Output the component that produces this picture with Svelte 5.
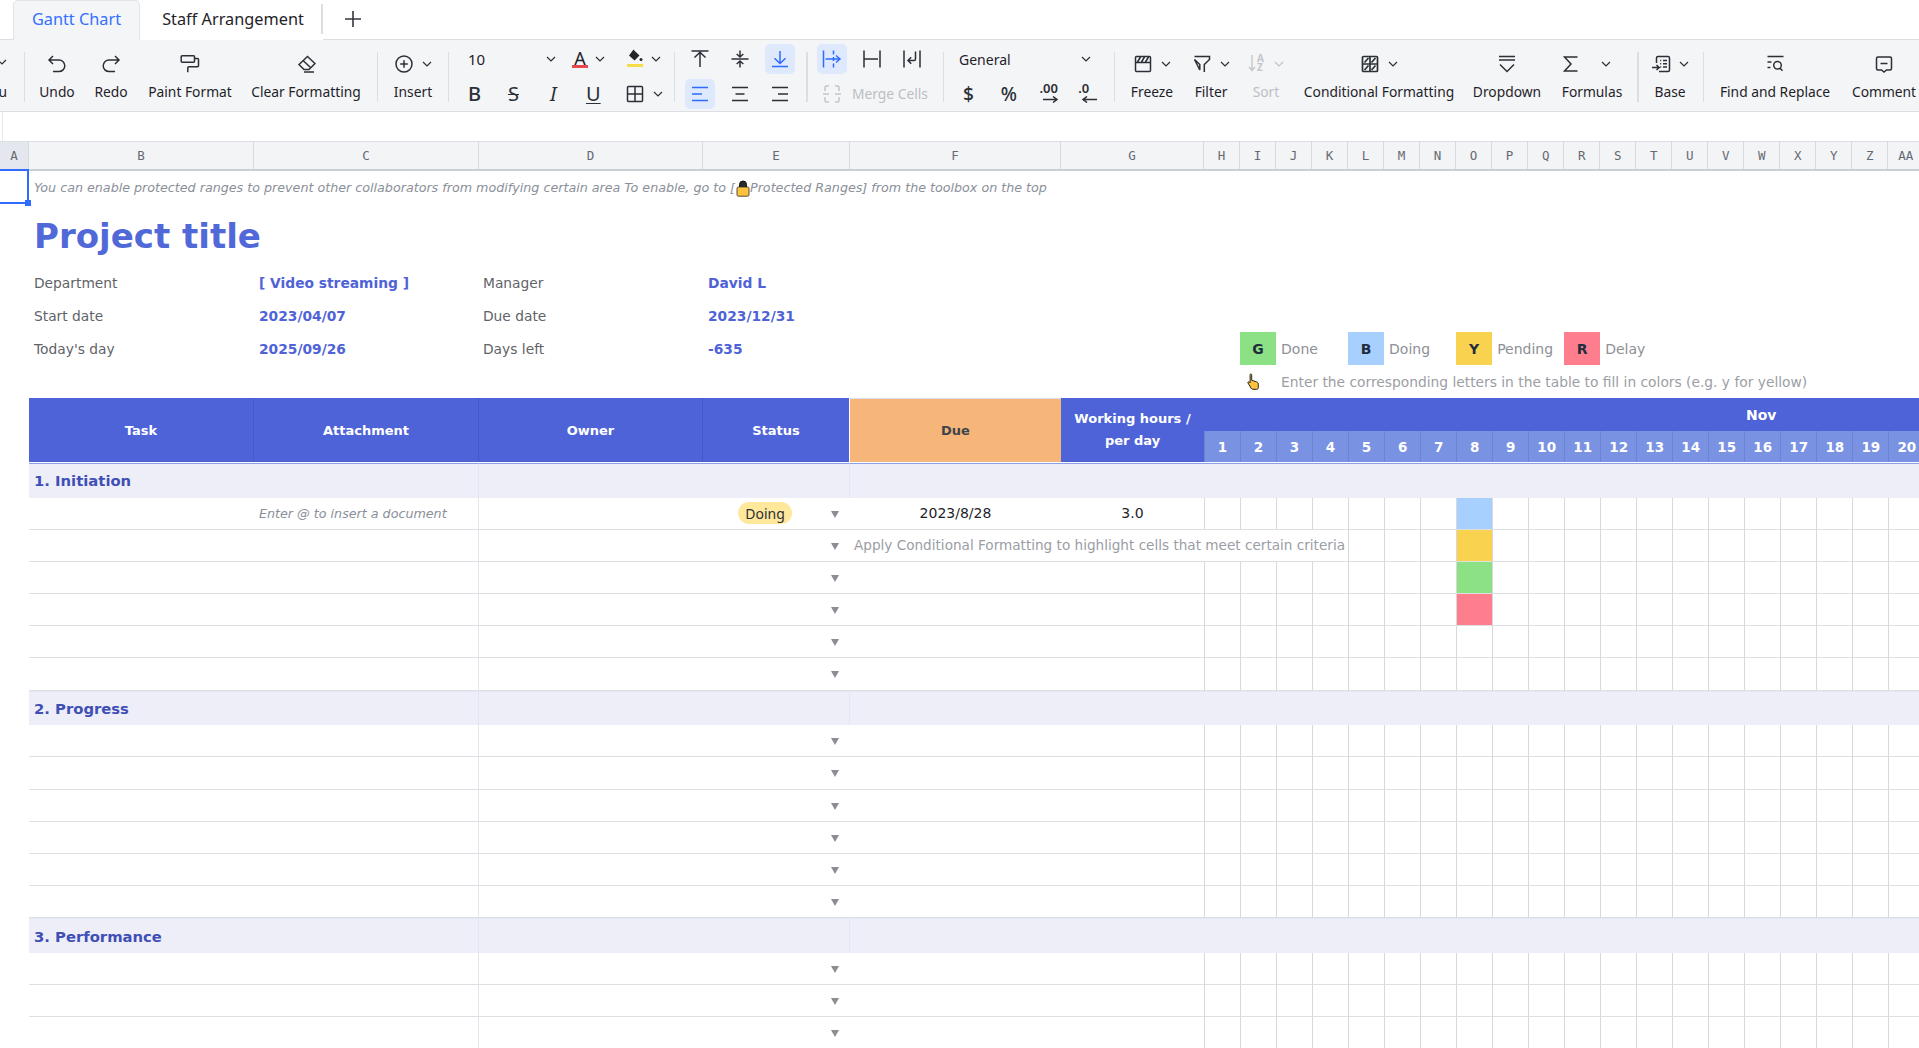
<script>
  const letters = ['A','B','C','D','E','F','G','H','I','J','K','L','M','N','O','P','Q','R','S','T','U','V','W','X','Y','Z','AA'];
  const days = Array.from({ length: 20 }, (_, i) => i + 1);
  const icons = {
    undo: ['M6 2 2 6l4 4M2.500 6h9.500a5.800 5.800 0 0 1 0 11.600H6'],
    redo: ['M14 2l4 4-4 4M17.500 6H8a5.800 5.800 0 0 0 0 11.600h6'],
    paint: ['M2.200 1.700h11.300a1 1 0 0 1 1 1v4.600a1 1 0 0 1-1 1H2.200a1 1 0 0 1-1-1V2.700a1 1 0 0 1 1-1zM14.500 4.500h3a1 1 0 0 1 1 1v6.200a1 1 0 0 1-1 1H8.800a1 1 0 0 0-1 1v4.600'],
    clear: ['M3 10.500 11.500 2.500 19 9.500 13 15.500H8zM7 6.500l7.500 7M8 18h10'],
    insert: ['M10 2a8 8 0 1 1 0 16 8 8 0 0 1 0-16zM10 6.200v7.600M6.200 10h7.600'],
    freeze: ['M3.500 2.500h13a1 1 0 0 1 1 1v13a1 1 0 0 1-1 1h-13a1 1 0 0 1-1-1v-13a1 1 0 0 1 1-1zM2.500 8.500h15M4.500 8l3-5M8.500 8l3-5M12.500 8l3-5'],
    filter: ['M2.500 2.500h15v3L12.300 10.500v7.500M7.800 16V10.500L2.500 5.500z'],
    cond: ['M3.500 2.500h13a1 1 0 0 1 1 1v13a1 1 0 0 1-1 1h-13a1 1 0 0 1-1-1v-13a1 1 0 0 1 1-1zM2.500 10h15M10 2.500v15M11.500 8.500l4-4.500M11.500 16l4-4.500M4.500 8.500l4-4.500M4.500 16l4-4.500'],
    dropdown: ['M2 2.500h16M2 6h16M3 10.500l7 7 7-7'],
    sigma: ['M16.500 3H3.500l6.500 7-6.500 7h13'],
    base: ['M5.500 9V4a1.500 1.500 0 0 1 1.500-1.500h10a1.500 1.500 0 0 1 1.500 1.500v12a1.500 1.500 0 0 1-1.500 1.500H8M9.200 6.500h1M12 6.500h4M9.200 9.800h1M12 9.800h4M9.200 13h1M12 13h4M1 13.500h7M5.500 11l2.700 2.500L5.500 16'],
    find: ['M2.500 2.500h16M2.500 8h4M2.500 13.500h3M12.500 7.500a3.800 3.800 0 1 1 0 7.600 3.800 3.800 0 0 1 0-7.600zM15.200 14.300l2.300 2.500'],
    comment: ['M4 3h12a1.500 1.500 0 0 1 1.500 1.500v10a1.500 1.500 0 0 1-1.500 1.500h-3.500L10 18l-2.500-2H4a1.500 1.500 0 0 1-1.500-1.500v-10A1.500 1.500 0 0 1 4 3zM6.500 9.500h7'],
    vtop: ['M1.500 2h17M10 18V3.200M4.500 8.500 10 3.200l5.500 5.300'],
    vmid: ['M1.500 10h17M10 1.500v6M6.700 5 10 8l3.300-3M10 18.500v-6M6.700 15 10 12l3.300 3'],
    vbot: ['M2 17.500h16M10 2v12.500M4.500 9.200 10 14.500l5.500-5.300'],
    hleft: ['M2 3.500h16M2 10h10M2 16.500h16'],
    hcenter: ['M2 3.500h16M5.500 10h9M2 16.500h16'],
    hright: ['M2 3.500h16M8 10h10M2 16.500h16'],
    wover: ['M1.500 1.500v17M11.500 1.500v4M11.500 8v4M11.500 14.500v4M3.500 10h14M14 6.500l4 3.500-4 3.500'],
    wclip: ['M2 1.500v17M18 1.500v17M2 10h14'],
    wwrap: ['M2 1.500v17M18 1.500v17M13.500 2.500V10a1.500 1.500 0 0 1-1.500 1.500H6M9.200 8.300 6 11.500l3.200 3.200'],
    merge: ['M3 7V3.500A1.500 1.500 0 0 1 4.500 2H7M3 13v3.500A1.500 1.500 0 0 0 4.500 18H7M17 7V3.500A1.500 1.500 0 0 0 15.500 2H13M17 13v3.500a1.500 1.500 0 0 1-1.500 1.500H13M1 10h6M19 10h-6']
  };
  const bigTools = [
    { w: 64, label: 'Undo', icon: 'undo' },
    { w: 44, label: 'Redo', icon: 'redo' },
    { w: 114, label: 'Paint Format', icon: 'paint' },
    { w: 118, label: 'Clear Formatting', icon: 'clear' }
  ];
  const blanks6 = [0, 1, 2, 3, 4, 5];
  const blanks3 = [0, 1, 2];
</script>

{#snippet ic(name, cls = '')}
  <svg class={'ic ' + cls} viewBox="0 0 20 20" aria-hidden="true">
    <path d={icons[name][0]} />
  </svg>
{/snippet}

{#snippet chev(cls = '')}
  <svg class={'chev ' + cls} viewBox="0 0 10 6" aria-hidden="true"><path d="M1 1l4 4 4-4" /></svg>
{/snippet}

{#snippet blankRow(mark)}
  <div class="row body">
    <div class="c gutter"></div>
    <div class="c task"></div>
    <div class="c owner"><span class="arrow"></span></div>
    <div class="c"></div>
    <div class="c"></div>
    {#each days as d}<div class="c day" class:green={mark === 'green' && d === 8} class:red={mark === 'red' && d === 8}></div>{/each}
  </div>
{/snippet}

{#snippet section(title)}
  <div class="row sec">
    <div class="c gutter"></div>
    <div class="c task sect">{title}</div>
    <div class="c owner secsplit"></div>
    <div class="c wide"></div>
  </div>
{/snippet}

<div class="page">
  <div class="tabs">
    <div class="lead"></div>
    <div class="tab on">Gantt Chart</div>
    <div class="tab off">Staff Arrangement</div>
    <div class="tabdiv"></div>
    <div class="plus"><svg viewBox="0 0 16 16" aria-hidden="true"><path d="M8 0v16M0 8h16" /></svg></div>
    <div class="tabrest"></div>
  </div>

  <div class="toolbar">
    <div class="menu"><span class="menu-ic">{@render chev()}</span><span class="tl menu-l">Menu</span></div>
    <i class="sep"></i>
    {#each bigTools as t}
      <div class="tool" style:width="{t.w}px">{@render ic(t.icon)}<span class="tl">{t.label}</span></div>
    {/each}
    <i class="sep sp12"></i>
    <div class="tool ins"><div class="tool-top">{@render ic('insert')}{@render chev()}</div><span class="tl">Insert</span></div>
    <i class="sep"></i>

    <div class="fontgrp">
      <div class="fr">
        <span class="fsize">10</span>{@render chev('c-size')}
        <span class="colorA">A<b></b></span>{@render chev('c-a')}
        <span class="bucket"><svg viewBox="0 0 16 14" aria-hidden="true"><path class="fillp" d="M6.500 0.500 7.800 2l4.700 4.600-5 4.800L2 6.500z" /><circle class="fillp" cx="14" cy="10.500" r="1.500" /></svg><b></b></span>{@render chev('c-b')}
      </div>
      <div class="fr two">
        <span class="g b">B</span>
        <span class="g s">S</span>
        <span class="g i">I</span>
        <span class="g u">U</span>
        <span class="bd"><svg class="ic" viewBox="0 0 20 20" aria-hidden="true"><path d="M3.500 2.500h13a1 1 0 0 1 1 1v13a1 1 0 0 1-1 1h-13a1 1 0 0 1-1-1v-13a1 1 0 0 1 1-1zM10 2.500v15M2.500 10h15" /></svg></span>{@render chev('c-bd')}
      </div>
    </div>
    <i class="sep"></i>

    <div class="aligns">
      <span class="sq">{@render ic('vtop')}</span>
      <span class="sq">{@render ic('vmid')}</span>
      <span class="sq act">{@render ic('vbot', 'bl')}</span>
      <span class="sq act">{@render ic('hleft', 'bl')}</span>
      <span class="sq">{@render ic('hcenter')}</span>
      <span class="sq">{@render ic('hright')}</span>
    </div>
    <i class="sep thick"></i>

    <div class="wraps">
      <div class="wr">
        <span class="sq act">{@render ic('wover', 'bl')}</span>
        <span class="sq">{@render ic('wclip')}</span>
        <span class="sq">{@render ic('wwrap')}</span>
      </div>
      <div class="mergec">{@render ic('merge', 'dis')}<span class="tl dis">Merge Cells</span></div>
    </div>
    <i class="sep"></i>

    <div class="numgrp">
      <div class="nr"><span class="general">General</span>{@render chev('c-gen')}</div>
      <div class="nr">
        <span class="n dollar">$</span>
        <span class="n pct">%</span>
        <span class="n dec">.00<svg viewBox="0 0 16 7" aria-hidden="true"><path d="M0 3.500h13M10 .5l4 3-4 3" /></svg></span>
        <span class="n dec">.0<svg viewBox="0 0 16 7" aria-hidden="true"><path d="M16 3.500H3M6 .5l-4 3 4 3" /></svg></span>
      </div>
    </div>
    <i class="sep"></i>

    <div class="tool frz"><div class="tool-top">{@render ic('freeze')}{@render chev()}</div><span class="tl">Freeze</span></div>
    <div class="tool flt"><div class="tool-top">{@render ic('filter')}{@render chev()}</div><span class="tl">Filter</span></div>
    <div class="tool srt"><div class="tool-top"><span class="sorti"><svg viewBox="0 0 8 18" aria-hidden="true"><path d="M4 1v15M1 13l3 3.500L7 13" /></svg><span class="az">A<br />Z</span></span>{@render chev('dis')}</div><span class="tl dis">Sort</span></div>
    <div class="tool cnd"><div class="tool-top">{@render ic('cond', 'heavy')}{@render chev()}</div><span class="tl">Conditional Formatting</span></div>
    <div class="tool drp">{@render ic('dropdown')}<span class="tl">Dropdown</span></div>
    <div class="tool fml"><div class="tool-top fmltop">{@render ic('sigma')}{@render chev()}</div><span class="tl">Formulas</span></div>
    <i class="sep thick sp8"></i>
    <div class="tool bas"><div class="tool-top">{@render ic('base')}{@render chev()}</div><span class="tl">Base</span></div>
    <i class="sep sp2"></i>
    <div class="tool fnd">{@render ic('find')}<span class="tl">Find and Replace</span></div>
    <div class="tool cmt">{@render ic('comment')}<span class="tl">Comment</span></div>
  </div>

  <div class="fbar"><div class="fbar-tick"></div></div>

  <div class="sheet">
    <div class="row hdr">
      {#each letters as l, i}<div class="hc" class:sel={i === 0}>{l}</div>{/each}
    </div>

    <div class="row r1">
      <div class="c cursor"><span class="handle"></span></div>
      <div class="note">You can enable protected ranges to prevent other collaborators from modifying certain area To enable, go to [<svg class="lock" viewBox="0 0 16 18" aria-hidden="true"><path class="shackle" d="M4.500 9V5.500a3.500 3.500 0 0 1 7 0V9z" /><rect class="lockbody" x="2" y="8" width="12" height="9.200" rx="1.500" /></svg>Protected Ranges] from the toolbox on the top</div>
    </div>

    <div class="row rt"><div class="c"></div><div class="title">Project title</div></div>

    <div class="row rm">
      <div class="c"></div>
      <div class="k">Department</div><div class="v">[ Video streaming ]</div>
      <div class="k ki">Manager</div><div class="v">David L</div>
    </div>
    <div class="row rm2">
      <div class="c"></div>
      <div class="k">Start date</div><div class="v">2023/04/07</div>
      <div class="k ki">Due date</div><div class="v">2023/12/31</div>
    </div>
    <div class="row rm3">
      <div class="c"></div>
      <div class="k">Today's day</div><div class="v">2025/09/26</div>
      <div class="k ki">Days left</div><div class="v">-635</div>
      <div class="legend">
        <span class="sw green">G</span><span class="lt">Done</span>
        <span class="sw blue">B</span><span class="lt">Doing</span>
        <span class="sw yellow">Y</span><span class="lt">Pending</span>
        <span class="sw red">R</span><span class="lt">Delay</span>
      </div>
    </div>
    <div class="row rh">
      <div class="handcell">
        <svg class="hand" viewBox="0 0 14 18" aria-hidden="true"><path d="M4.200 1.200c.8-.6 1.500 0 1.500.9v5.200l4.800 1.500c1.300.4 1.800 1.100 1.800 2.300v3.500c0 1-.6 1.700-1.500 1.700H6.800c-.8 0-1.300-.4-1.700-1.100L2 10c-.5-.9.600-1.700 1.400-1l.7.800V2.300c0-.4 0-.8.100-1.100z" /></svg>
      </div>
      <div class="hint">Enter the corresponding letters in the table to fill in colors (e.g. y for yellow)</div>
    </div>

    <div class="head">
      <div class="hg"></div>
      <div class="hh">Task</div>
      <div class="hh">Attachment</div>
      <div class="hh">Owner</div>
      <div class="hh last">Status</div>
      <div class="hh due">Due</div>
      <div class="hh wh">Working hours /<br />per day</div>
      <div class="month">Nov</div>
      {#each days as d}<div class="dn">{d}</div>{/each}
    </div>

    {@render section('1. Initiation')}

    <div class="row body">
      <div class="c gutter"></div>
      <div class="c task"><span class="ph">Enter @ to insert a document</span></div>
      <div class="c owner"><span class="pill">Doing</span><span class="arrow"></span></div>
      <div class="c ctr">2023/8/28</div>
      <div class="c ctr">3.0</div>
      {#each days as d}<div class="c day" class:blue={d === 8}></div>{/each}
    </div>

    <div class="row body">
      <div class="c gutter"></div>
      <div class="c task"></div>
      <div class="c owner"><span class="arrow"></span></div>
      <div class="c over">Apply Conditional Formatting to highlight cells that meet certain criteria</div>
      {#each days.slice(4) as d}<div class="c day" class:yellow={d === 8}></div>{/each}
    </div>

    {@render blankRow('green')}
    {@render blankRow('red')}
    {@render blankRow('')}
    {@render blankRow('')}

    {@render section('2. Progress')}
    {#each blanks6 as n}{@render blankRow('')}{/each}

    {@render section('3. Performance')}
    {#each blanks3 as n}{@render blankRow('')}{/each}
  </div>
</div>

<style>
  :global(body) { margin: 0; background: #fff; overflow: hidden; }
  .page {
    width: 1919px; height: 1048px; overflow: hidden; background: #fff;
    font-family: "Noto Sans", sans-serif; color: #1f2329;
    --cols: 29px 225px 225px 224px 147px 211px 143px repeat(20, 36.03px);
    --cell: "DejaVu Sans", sans-serif;
  }

  /* tabs */
  .tabs { display: flex; height: 40px; align-items: stretch; font-size: 16.300px; }
  .lead { width: 13px; border-bottom: 1px solid #dcdee3; }
  .tab { display: flex; align-items: center; justify-content: center; padding-bottom: 3px; box-sizing: border-box; }
  .tab.on { width: 127px; color: #3370ff; background: #f4f5f7; border: 1px solid #e1e3e8; border-bottom: 0; border-radius: 5px 5px 0 0; }
  .tab.off { width: 181px; padding-left: 5px; color: #1f2329; background: #fff; }
  .tabdiv { width: 2px; height: 30px; margin-top: 4px; background: #dcdee3; }
  .plus { width: 16px; margin-left: 22px; display: flex; align-items: center; padding-bottom: 2px; }
  .plus svg { width: 16px; height: 16px; }
  .plus path { stroke: #33373d; stroke-width: 1.6; fill: none; }
  .tabrest { flex: 1; border-bottom: 1px solid #dcdee3; margin-left: -38px; }

  /* toolbar */
  .toolbar {
    height: 72px; box-sizing: border-box; background: #f4f5f7;
    border-bottom: 1px solid #dcdee3; display: flex; align-items: flex-start;
    white-space: nowrap; overflow: hidden;
  }
  .tl { font-size: 13.800px; line-height: 20px; color: #1f2329; }
  .tl.dis { color: #bbbfc4; }
  .sep { width: 1px; height: 50px; margin-top: 12px; background: #dcdee3; flex: none; display: block; }
  .sep.thick { width: 2px; }
  .sp12 { margin-left: 12px; }
  .sp8 { margin-left: 8px; }
  .sp2 { margin-left: 2px; }
  .menu { width: 24px; height: 71px; position: relative; overflow: hidden; flex: none; }
  .menu-l { position: absolute; right: 17px; top: 42px; }
  .menu-ic { position: absolute; left: -3px; top: 19px; display: flex; }
  .tool { display: flex; flex-direction: column; align-items: center; flex: none; padding-top: 14px; box-sizing: border-box; height: 71px; }
  .tool > .tl { margin-top: 8px; }
  .tool-top { height: 20px; display: flex; align-items: center; gap: 8px; }
  .ic { width: 20px; height: 20px; flex: none; display: block; }
  .ic path { fill: none; stroke: #2b2f36; stroke-width: 1.5; }
  .ic.bl path { stroke: #2f6bff; }
  .ic.dis path { stroke: #c2c5ca; }
  .ic.heavy path { stroke-width: 1.7; }
  .chev { width: 10px; height: 6px; flex: none; display: block; }
  .chev path { fill: none; stroke: #2b2f36; stroke-width: 1.2; }
  .chev.dis path { stroke: #c2c5ca; }

  .ins { width: 70px; }

  .fontgrp { width: 225px; height: 71px; flex: none; display: flex; flex-direction: column; padding: 4px 0 0 19px; box-sizing: border-box; }
  .fr { height: 30px; display: flex; align-items: center; }
  .fr.two { margin-top: 5px; margin-left: -6px; }
  .fsize { width: 78px; font-size: 15px; color: #1f2329; }
  .colorA { width: 16px; height: 22px; position: relative; text-align: center; font-size: 18px; line-height: 20px; color: #1f2329; }
  .colorA b { position: absolute; left: 0; right: 0; top: 17px; height: 3px; background: #e5484d; }
  :global(.c-size) { margin-right: 16px; }
  :global(.c-a) { margin-left: 7px; margin-right: 22px; }
  :global(.c-b) { margin-left: 8px; }
  :global(.c-bd) { margin-left: 8px; }
  .bucket { width: 16px; height: 22px; position: relative; }
  .bucket svg { width: 16px; height: 14px; position: absolute; left: 0; top: 1px; }
  .fillp { fill: #22262b; }
  .bucket b { position: absolute; left: 0; right: 0; top: 16px; height: 3px; background: #f5de45; }
  .g { width: 40px; text-align: left; padding-left: 6px; box-sizing: border-box; font-size: 20px; line-height: 24px; color: #2b2f36; }
  .g.b { font-weight: 500; }
  .g.s { text-decoration: line-through; text-decoration-thickness: 1.4px; }
  .g.i { font-style: italic; padding-left: 8px; }
  .g.u { text-decoration: underline; text-decoration-thickness: 1.4px; text-underline-offset: 2px; padding-left: 4px; }
  .bd { width: 20px; margin-left: 3px; }

  .aligns { width: 131px; flex: none; display: grid; grid-template-columns: repeat(3, 30px); gap: 5px 10px; padding: 4px 0 0 10px; box-sizing: border-box; }
  .sq { width: 30px; height: 30px; display: flex; align-items: center; justify-content: center; border-radius: 5px; }
  .sq.act { background: #dfe9fe; }

  .wraps { width: 135px; flex: none; padding: 4px 0 0 9px; box-sizing: border-box; }
  .wr { display: flex; gap: 10px; }
  .mergec { display: flex; align-items: center; gap: 10px; margin-top: 5px; height: 30px; padding-left: 5px; }

  .numgrp { width: 170px; flex: none; padding: 4px 0 0 15px; box-sizing: border-box; }
  .nr { height: 30px; display: flex; align-items: center; }
  .nr + .nr { margin-top: 5px; }
  .general { width: 122px; font-size: 14px; }
  .n { width: 40px; font-size: 19px; line-height: 24px; display: block; text-align: left; color: #2b2f36; box-sizing: border-box; padding-left: 4px; }
  .dollar { font-weight: 500; }
  .pct { font-weight: 500; padding-left: 3px; }
  .dec { position: relative; font-size: 13px; font-weight: 600; line-height: 14px; height: 26px; padding-left: 3px; }
  .dec svg { position: absolute; left: 6px; top: 15px; width: 16px; height: 7px; }
  .dec path { fill: none; stroke: #2b2f36; stroke-width: 1.5; }

  .frz { width: 74px; }
  .flt { width: 44px; }
  .srt { width: 66px; }
  .cnd { width: 160px; }
  .drp { width: 96px; }
  .fml { width: 74px; }
  .fmltop { gap: 20px; padding-right: 12px; }
  .sorti { display: flex; width: 18px; height: 20px; gap: 1px; }
  .sorti svg { width: 8px; height: 18px; }
  .sorti path { fill: none; stroke: #c2c5ca; stroke-width: 1.3; }
  .az { font-size: 10px; line-height: 9px; color: #c2c5ca; font-weight: 700; }
  .bas { width: 62px; }
  .fnd { width: 142px; }
  .cmt { width: 76px; }

  /* formula bar */
  .fbar { height: 30px; box-sizing: border-box; border-bottom: 1px solid #dcdee3; padding-left: 2px; }
  .fbar-tick { width: 1px; height: 100%; background: #e8e9ec; }

  /* sheet */
  .sheet { font-family: var(--cell); font-size: 13.800px; }
  .row { display: grid; grid-template-columns: var(--cols); white-space: nowrap; }
  .hdr { height: 29px; box-sizing: border-box; border-bottom: 2px solid #cbced4; background: #f3f4f6; }
  .hc { display: flex; align-items: center; justify-content: center; border-right: 1px solid #d8dadf; font-family: "DejaVu Sans Mono", monospace; font-size: 12.500px; color: #646a73; }
  .hc.sel { background: #e4e7ed; box-shadow: 0 2px 0 #2f6bff; }
  .r1 { height: 33px; align-items: center; }
  .cursor { height: 33px; box-sizing: border-box; border-right: 2px solid #2f6bff; border-bottom: 2px solid #2f6bff; position: relative; }
  .handle { position: absolute; right: -4px; bottom: -4px; width: 6px; height: 6px; background: #2f6bff; }
  .note { grid-column: 2 / -1; padding-left: 5px; color: #8a8f99; font-style: italic; font-size: 12.700px; display: flex; align-items: center; }
  .lock { width: 16px; height: 18px; flex: none; margin-right: -1px; }
  .shackle { fill: #2a2a2a; stroke: #111; }
  .lockbody { fill: #fdc33e; stroke: #2a2a2a; stroke-width: .8; }
  .rt { height: 63px; align-items: center; }
  .title { grid-column: 2 / -1; padding-left: 5px; font-size: 34px; font-weight: 700; color: #5168d8; line-height: 40px; }
  .rm, .rm2, .rm3 { align-items: center; }
  .rm { height: 32px; }
  .rm2 { height: 33px; }
  .rm3 { height: 33px; }
  .k { padding-left: 5px; color: #5f6368; }
  .ki { padding-left: 4px; }
  .v { padding-left: 5px; color: #4f63d7; font-weight: 700; }
  .legend { grid-column: 8 / -1; display: grid; grid-template-columns: repeat(20, 36.03px); height: 33px; align-items: center; }
  .sw { height: 33px; display: flex; align-items: center; justify-content: center; font-weight: 700; color: #1f2d3d; font-size: 14px; }
  .sw.green { grid-column: 2; background: #8de185; }
  .sw.blue { grid-column: 5; background: #a8d0ff; }
  .sw.yellow { grid-column: 8; background: #f9d34f; }
  .sw.red { grid-column: 11; background: #ff7e8e; }
  .lt { padding-left: 5px; color: #8d9096; font-size: 14px; }
  .rh { height: 33px; align-items: center; }
  .handcell { grid-column: 9; display: flex; justify-content: center; padding-right: 10px; }
  .hand { width: 14px; height: 18px; }
  .hand path { fill: #fdc33e; stroke: #222; stroke-width: 1; }
  .hint { grid-column: 10 / -1; padding-left: 5px; color: #9b9ea4; font-size: 13.800px; }

  /* table head */
  .head {
    display: grid; grid-template-columns: var(--cols); grid-template-rows: 33px 31px;
    height: 65px; box-sizing: border-box; border-bottom: 1px solid #fff;
    color: #fff; font-weight: 700; font-size: 13px; text-align: center;
  }
  .hg { grid-row: 1 / 3; }
  .hh { grid-row: 1 / 3; background: #4e63d7; display: flex; align-items: center; justify-content: center; border-right: 1px solid #4558c4; }
  .hh.last { border-right: 1px solid #fff; }
  .hh.due { background: #f6b679; color: #3f434b; border-right: 0; border-top: 1px solid #dcdee3; }
  .hh.wh { line-height: 22px; border-right: 0; }
  .month { grid-column: 8 / -1; background: #4e63d7; display: flex; align-items: center; justify-content: center; padding-left: 394px; font-size: 14px; }
  .dn { background: #7a92e2; border-left: 1px solid #6c83d6; display: flex; align-items: center; justify-content: center; font-size: 13.500px; }

  /* body */
  .c { min-width: 0; }
  .sec { height: 34.500px; }
  .sec .task, .sec .owner, .sec .wide { background: #edeef7; border-top: 1px solid #e4e8f8; box-sizing: border-box; }
  .head + .sec .task, .head + .sec .owner, .head + .sec .wide { border-top-color: #8da0e6; }
  .sect { display: flex; align-items: center; padding-left: 5px; font-weight: 700; color: #3f4fb5; font-size: 14.800px; }
  .sec .task { grid-column: 2 / 4; border-right: 1px solid #e3e6f4; }
  .sec .owner { grid-column: 4 / 6; }
  .secsplit { border-right: 1px solid #e3e6f4; }
  .wide { grid-column: 6 / -1; }

  .body { height: 32.200px; box-sizing: border-box; color: #1f2329; }
  .body .c:not(.gutter) { border-bottom: 1px solid #dedfe2; box-sizing: border-box; }
  .task { grid-column: 2 / 4; border-right: 1px solid #e2e5ee; display: flex; align-items: center; }
  .ph { margin-left: 230px; color: #8a8f99; font-style: italic; font-size: 12.700px; }
  .owner { grid-column: 4 / 6; position: relative; display: flex; align-items: center; }
  .pill { margin-left: 259px; height: 22px; width: 54px; border-radius: 11px; background: #ffe79b; display: flex; align-items: center; justify-content: center; font-size: 14px; color: #2b2f36; font-family: "Noto Sans", sans-serif; }
  .arrow { position: absolute; left: 352px; top: 13px; width: 0; height: 0; border-left: 4px solid transparent; border-right: 4px solid transparent; border-top: 7px solid #8a8d93; }
  .ctr { display: flex; align-items: center; justify-content: center; font-size: 14px; }
  .day { border-left: 1px solid #d9d9dc; box-sizing: border-box; }
  .over { grid-column: span 6; display: flex; align-items: center; padding-left: 4px; color: #9a9da5; font-size: 13.600px; }
  .day.blue { background: #a8d0ff; }
  .day.yellow { background: #f9d34f; }
  .day.green { background: #8de185; }
  .day.red { background: #ff7e8e; }
</style>
